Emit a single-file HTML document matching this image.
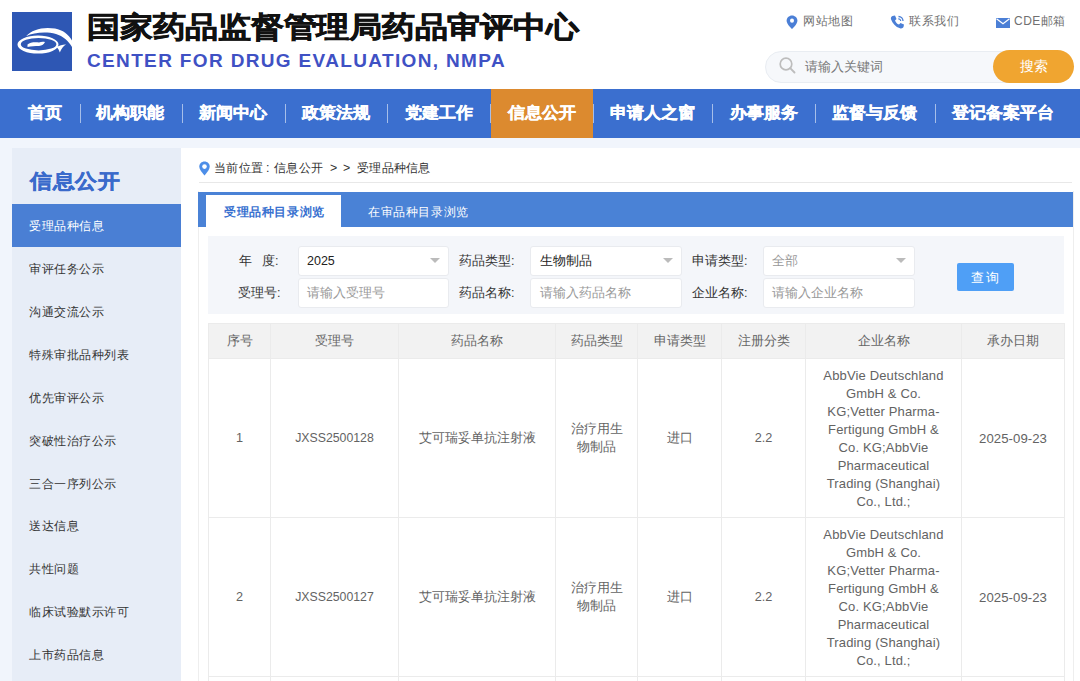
<!DOCTYPE html>
<html><head><meta charset="utf-8">
<style>
*{margin:0;padding:0;box-sizing:border-box}
html,body{width:1080px;height:681px;overflow:hidden}
body{font-family:"Liberation Sans",sans-serif;background:#f1f5fc;position:relative;color:#333}
.abs{position:absolute;white-space:nowrap}
#hdr{left:0;top:0;width:1080px;height:89px;background:#fff}
#logo{left:12px;top:12px;width:60px;height:59px;background:#2e57b4;overflow:hidden}
#t1{left:87px;top:9.5px;font-size:33px;font-weight:bold;color:#111;line-height:40px;transform-origin:0 0;transform:scale(0.993,0.87);-webkit-text-stroke:0.7px #111}
#t2{left:87px;top:50px;font-size:19px;font-weight:bold;color:#3f51c4;letter-spacing:1.35px;line-height:22px}
.tl{font-size:12px;letter-spacing:0.5px;color:#707070;top:14px;line-height:15px}
#search{left:765px;top:51px;width:308px;height:32px;border-radius:16px;background:#f6f8fb;border:1px solid #e9edf2}
#sbtn{left:993px;top:50px;width:81px;height:33px;border-radius:17px;background:#f0a530;color:#fff;font-size:14px;text-align:center;line-height:33px}
#nav{left:0;top:89px;width:1080px;height:49px;background:#3b6fcf}
#navon{left:491px;top:89px;width:102px;height:49px;background:#dc8a2f}
.ni{top:89px;height:49px;line-height:48px;color:#fff;font-size:17px;font-weight:bold;-webkit-text-stroke:0.35px #fff;transform-origin:0 50%;transform:scaleY(0.94)}
.sep{top:104px;width:1px;height:19px;background:rgba(255,255,255,.55)}
#side{left:12px;top:148px;width:169px;height:540px;background:#e7edf7}
#sidet{left:29.5px;top:169px;font-size:22.5px;font-weight:bold;color:#3a6acb;line-height:28px;-webkit-text-stroke:0.5px #3a6acb;transform-origin:0 0;transform:scale(0.985,0.9)}
#sideon{left:12px;top:204px;width:169px;height:43px;background:#4a7fd4}
.si{left:29px;font-size:12px;color:#333;line-height:16px;margin-top:1px;letter-spacing:0.55px}
#main{left:181px;top:148px;width:899px;height:540px;background:#fff}
.bc{top:160px;font-size:12.4px;color:#333;line-height:16px;letter-spacing:0.3px}
#bcline{left:199px;top:182px;width:873px;height:1px;background:#e8e8e8}
#panel{left:198px;top:191px;width:876px;height:500px;border:1px solid #eeeeee;border-top:none}
#tabbar{left:198px;top:191.5px;width:875px;height:35.5px;background:#4a82d6}
#tabon{left:206px;top:195px;width:135px;height:32px;background:#fff}
.tab{top:204px;font-size:12.4px;letter-spacing:0.6px;line-height:16px}
#filter{left:208px;top:236px;width:856px;height:78px;background:#f4f6fa}
.fl{font-size:12.5px;color:#333;line-height:16px}
.box{background:#fff;border:1px solid #e9ebef;border-radius:3px}
.ph{font-size:12.5px;color:#999;line-height:16px}
.arr{width:0;height:0;border-left:5px solid transparent;border-right:5px solid transparent;border-top:5px solid #bbb}
#qbtn{left:957px;top:263px;width:57px;height:28px;background:#4f9ff6;border-radius:2px;color:#fff;font-size:13px;text-align:center;line-height:30px;letter-spacing:2px;padding-left:1px}
table{position:absolute;left:208px;top:323px;border-collapse:collapse;table-layout:fixed;font-size:12.7px;color:#636363}
td,th{border:1px solid #ebebeb;text-align:center;vertical-align:middle;font-weight:normal}
th{height:35px;background:#f2f2f2;color:#666;font-size:12.5px}
td{height:159px;line-height:17.9px;padding-top:2px}
.co{font-size:13px;letter-spacing:0.15px}
.jx{font-size:12.3px}
.dt{font-size:13.2px;letter-spacing:0.05px}
</style></head><body>
<div id="hdr" class="abs"></div>
<div id="logo" class="abs">
<svg width="60" height="59" viewBox="0 0 60 59">
<path d="M14 24.2 C20 17.5 31 14.5 43 16.5 C51 18 56.5 22.5 60 28.5 L60 35 C56.5 29 51 24 44 22 C34 19.5 22 20.5 14 24.2 Z" fill="#fff"/>
<path fill-rule="evenodd" fill="#fff" d="M5.5 32.6 A20.5 9 0 1 0 46.5 32.6 A20.5 9 0 1 0 5.5 32.6 Z M8.8 32.2 A17.8 6.2 0 1 0 44.4 32.2 A17.8 6.2 0 1 0 8.8 32.2 Z"/>
<path d="M44.5 35 C48 33.2 51 32.3 54 32.5 C51.5 34 49.5 36.5 47.8 40.5 C47.2 38.5 46.2 36.5 44.5 35 Z" fill="#fff"/>
<path d="M15.5 32.5 C18 30.3 23 30 27 30.6 C29 29.6 31 29.4 33 30 C32 32 30 33.8 27 34 C23 34 19 34 15.5 35 Z" fill="#fff"/>
</svg>
</div>
<div id="t1" class="abs">国家药品监督管理局药品审评中心</div>
<div id="t2" class="abs">CENTER FOR DRUG EVALUATION, NMPA</div>
<svg class="abs" style="left:786px;top:14.5px" width="12" height="14" viewBox="0 0 12 13.6" preserveAspectRatio="none"><path d="M6 0.5C2.9 0.5 0.6 2.8 0.6 5.6 0.6 9 6 13.6 6 13.6S11.4 9 11.4 5.6C11.4 2.8 9.1 0.5 6 0.5Z" fill="#4b7fd6"/><circle cx="6" cy="5.5" r="2" fill="#fff"/></svg>
<div class="abs tl" style="left:803px">网站地图</div>
<svg class="abs" style="left:890px;top:15px" width="15" height="14" viewBox="0 0 15 14"><path d="M2.5 1 L5 0.5 L6.5 4 L5 5.5 C5.8 7.5 7 8.8 9 9.6 L10.5 8 L14 9.5 L13.5 12 C13 13.2 11.5 13.8 10 13.3 C5.5 11.8 2.5 8.5 1 4.2 C0.6 2.8 1.3 1.5 2.5 1Z" fill="#4b7fd6"/><path d="M8.5 1.5 A4.5 4.5 0 0 1 13 6" stroke="#4b7fd6" stroke-width="1.3" fill="none"/><path d="M8.3 3.8 A2.3 2.3 0 0 1 10.7 6" stroke="#4b7fd6" stroke-width="1.2" fill="none"/></svg>
<div class="abs tl" style="left:909px">联系我们</div>
<svg class="abs" style="left:996px;top:18px" width="14" height="10" viewBox="0 0 14 10"><rect x="0" y="0" width="14" height="10" fill="#4b7fd6"/><path d="M0.5 0.8 L7 5.8 L13.5 0.8" stroke="#fff" stroke-width="1.2" fill="none"/></svg>
<div class="abs tl" style="left:1014px">CDE邮箱</div>
<div id="search" class="abs"></div>
<svg class="abs" style="left:779px;top:57px" width="18" height="17" viewBox="0 0 18 17"><circle cx="7" cy="7" r="5.8" stroke="#bdbdbd" stroke-width="1.7" fill="none"/><path d="M11.2 11.2 L15.5 15.5" stroke="#bdbdbd" stroke-width="1.9" stroke-linecap="round"/></svg>
<div class="abs" style="left:805px;top:58px;font-size:13.3px;color:#777;line-height:17px">请输入关键词</div>
<div id="sbtn" class="abs">搜索</div>

<div id="nav" class="abs"></div>
<div id="navon" class="abs"></div>
<div class="abs ni" style="left:28px">首页</div>
<div class="abs sep" style="left:80px"></div>
<div class="abs ni" style="left:96px">机构职能</div>
<div class="abs sep" style="left:182px"></div>
<div class="abs ni" style="left:199px">新闻中心</div>
<div class="abs sep" style="left:285px"></div>
<div class="abs ni" style="left:302px">政策法规</div>
<div class="abs sep" style="left:387px"></div>
<div class="abs ni" style="left:405px">党建工作</div>
<div class="abs sep" style="left:490px"></div>
<div class="abs ni" style="left:508px">信息公开</div>
<div class="abs sep" style="left:593px"></div>
<div class="abs ni" style="left:610px">申请人之窗</div>
<div class="abs sep" style="left:712px"></div>
<div class="abs ni" style="left:730px">办事服务</div>
<div class="abs sep" style="left:815px"></div>
<div class="abs ni" style="left:832px">监督与反馈</div>
<div class="abs sep" style="left:935px"></div>
<div class="abs ni" style="left:952px">登记备案平台</div>

<div id="side" class="abs"></div>
<div id="sidet" class="abs">信息公开</div>
<div id="sideon" class="abs"></div>
<div class="abs si" style="top:217px;color:#fff">受理品种信息</div>
<div class="abs si" style="top:260px">审评任务公示</div>
<div class="abs si" style="top:303px">沟通交流公示</div>
<div class="abs si" style="top:346px">特殊审批品种列表</div>
<div class="abs si" style="top:389px">优先审评公示</div>
<div class="abs si" style="top:432px">突破性治疗公示</div>
<div class="abs si" style="top:475px">三合一序列公示</div>
<div class="abs si" style="top:517px">送达信息</div>
<div class="abs si" style="top:560px">共性问题</div>
<div class="abs si" style="top:603px">临床试验默示许可</div>
<div class="abs si" style="top:646px">上市药品信息</div>

<div id="main" class="abs"></div>
<svg class="abs" style="left:199px;top:161px" width="11" height="15" viewBox="0 0 11 15"><path d="M5.5 0.5C2.5 0.5 0.3 2.8 0.3 5.6 0.3 9.3 5.5 14.5 5.5 14.5S10.7 9.3 10.7 5.6C10.7 2.8 8.5 0.5 5.5 0.5Z" fill="#4d8ee8"/><circle cx="5.5" cy="5.6" r="2.3" fill="#fff"/></svg>
<div class="abs bc" style="left:214px">当前位置</div><div class="abs bc" style="left:266px">:</div><div class="abs bc" style="left:274px">信息公开</div><div class="abs bc" style="left:330px">&gt;</div><div class="abs bc" style="left:343px">&gt;</div><div class="abs bc" style="left:357px">受理品种信息</div>
<div id="bcline" class="abs"></div>
<div id="panel" class="abs"></div>
<div id="tabbar" class="abs"></div>
<div id="tabon" class="abs"></div>
<div class="abs tab" style="left:224px;color:#3a72d0;font-weight:bold">受理品种目录浏览</div>
<div class="abs tab" style="left:368px;color:#fff">在审品种目录浏览</div>

<div id="filter" class="abs"></div>
<div class="abs fl" style="left:239px;top:253px">年</div>
<div class="abs fl" style="left:262px;top:253px">度:</div>
<div class="abs fl" style="left:238px;top:285px">受理号:</div>
<div class="abs fl" style="left:459px;top:253px">药品类型:</div>
<div class="abs fl" style="left:459px;top:285px">药品名称:</div>
<div class="abs fl" style="left:692px;top:253px">申请类型:</div>
<div class="abs fl" style="left:692px;top:285px">企业名称:</div>

<div class="abs box" style="left:298px;top:245.5px;width:151px;height:30px"></div>
<div class="abs fl" style="left:307px;top:253px;color:#222">2025</div>
<div class="abs arr" style="left:430px;top:258px"></div>
<div class="abs box" style="left:298px;top:278px;width:151px;height:30px"></div>
<div class="abs ph" style="left:307px;top:285px">请输入受理号</div>

<div class="abs box" style="left:530px;top:245.5px;width:152px;height:30px"></div>
<div class="abs fl" style="left:540px;top:253px;color:#222">生物制品</div>
<div class="abs arr" style="left:663px;top:258px"></div>
<div class="abs box" style="left:530px;top:278px;width:152px;height:30px"></div>
<div class="abs ph" style="left:540px;top:285px">请输入药品名称</div>

<div class="abs box" style="left:763px;top:245.5px;width:152px;height:30px"></div>
<div class="abs ph" style="left:772px;top:253px">全部</div>
<div class="abs arr" style="left:896px;top:258px"></div>
<div class="abs box" style="left:763px;top:278px;width:152px;height:30px"></div>
<div class="abs ph" style="left:772px;top:285px">请输入企业名称</div>
<div id="qbtn" class="abs">查询</div>

<table>
<colgroup><col style="width:62px"><col style="width:128px"><col style="width:157px"><col style="width:82px"><col style="width:84px"><col style="width:84px"><col style="width:156px"><col style="width:103px"></colgroup>
<tr><th>序号</th><th>受理号</th><th>药品名称</th><th>药品类型</th><th>申请类型</th><th>注册分类</th><th>企业名称</th><th>承办日期</th></tr>
<tr><td>1</td><td class="jx">JXSS2500128</td><td>艾可瑞妥单抗注射液</td><td>治疗用生<br>物制品</td><td>进口</td><td>2.2</td><td class="co">AbbVie Deutschland<br>GmbH &amp; Co.<br>KG;Vetter Pharma-<br>Fertigung GmbH &amp;<br>Co. KG;AbbVie<br>Pharmaceutical<br>Trading (Shanghai)<br>Co., Ltd.;</td><td class="dt">2025-09-23</td></tr>
<tr><td>2</td><td class="jx">JXSS2500127</td><td>艾可瑞妥单抗注射液</td><td>治疗用生<br>物制品</td><td>进口</td><td>2.2</td><td class="co">AbbVie Deutschland<br>GmbH &amp; Co.<br>KG;Vetter Pharma-<br>Fertigung GmbH &amp;<br>Co. KG;AbbVie<br>Pharmaceutical<br>Trading (Shanghai)<br>Co., Ltd.;</td><td class="dt">2025-09-23</td></tr>
<tr><td>3</td><td></td><td></td><td></td><td></td><td></td><td></td><td></td></tr>
</table>
</body></html>
